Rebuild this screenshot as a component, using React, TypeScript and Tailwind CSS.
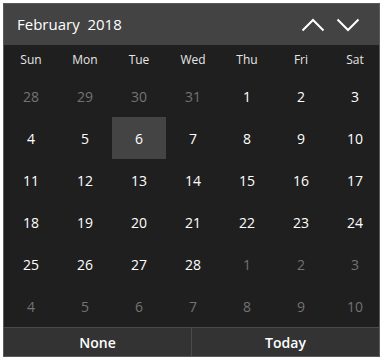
import React from "react"

const weekdays = ["Sun", "Mon", "Tue", "Wed", "Thu", "Fri", "Sat"]

type Day = { n: number; cur: boolean }

function buildDays(): Day[] {
  const days: Day[] = []
  for (const n of [28, 29, 30, 31]) days.push({ n, cur: false })
  for (let n = 1; n <= 28; n++) days.push({ n, cur: true })
  for (let n = 1; n <= 10; n++) days.push({ n, cur: false })
  return days
}

export default function App() {
  const days = buildDays()

  return (
    <div className="min-h-screen bg-white pt-[3px] pl-[3px]" style={{ fontFamily: '"Open Sans", "Noto Sans", sans-serif' }}>
      <div className="w-[377px] overflow-hidden border border-[#5a5a5a] bg-[#1f1f1f]">
        {/* header */}
        <div className="flex h-[41px] items-center justify-between bg-[#434343] pl-[13px] pr-[19px]">
          <span className="whitespace-pre text-[15px] text-white">February  2018</span>
          <div className="flex items-center gap-[11px]">
            <svg width="24" height="14" viewBox="0 0 24 14" fill="none">
              <path d="M1.5 12.5 L12 2 L22.5 12.5" stroke="white" strokeWidth="2" />
            </svg>
            <svg width="24" height="14" viewBox="0 0 24 14" fill="none">
              <path d="M1.5 1.5 L12 12 L22.5 1.5" stroke="white" strokeWidth="2" />
            </svg>
          </div>
        </div>

        {/* weekdays + days */}
        <div className="grid w-[378px] grid-cols-[repeat(7,54px)]">
          {weekdays.map((d) => (
            <div key={d} className="flex h-[30px] items-center justify-center text-[12px] text-[#e6e6e6]">
              {d}
            </div>
          ))}
          {days.map((d, i) => (
            <div
              key={i}
              className={
                "flex h-[42px] items-center justify-center text-[14px] " +
                (d.cur ? "text-white " : "text-[#737373] ") +
                (d.cur && d.n === 6 ? "bg-[#444444]" : "")
              }
            >
              {d.n}
            </div>
          ))}
        </div>

        {/* footer */}
        <div className="flex h-[29px] border-t border-[#4a4a4a] bg-[#333333]">
          <button className="flex w-[188px] items-center justify-center border-r border-[#4a4a4a] text-[14px] font-semibold text-white">
            None
          </button>
          <button className="flex flex-1 items-center justify-center text-[14px] font-semibold text-white">
            Today
          </button>
        </div>
      </div>
    </div>
  )
}
